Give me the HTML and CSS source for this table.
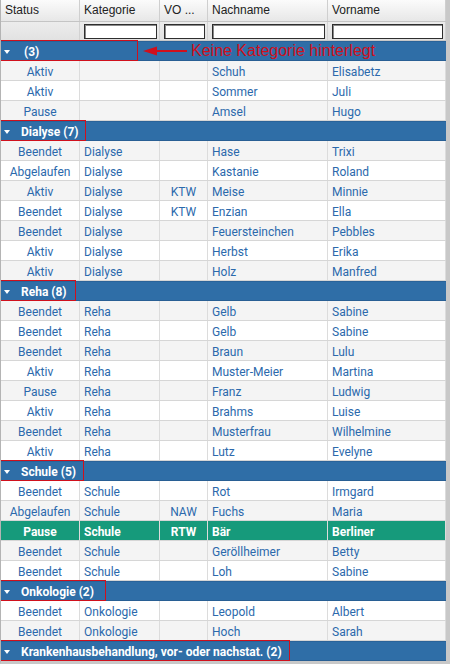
FILE: index.html
```html
<!DOCTYPE html>
<html lang="de">
<head>
<meta charset="utf-8">
<link rel="stylesheet" href="styles.css">
</head>
<body>
<div class="grid">
  <div class="row head">
    <div class="hc">Status</div>
    <div class="hc">Kategorie</div>
    <div class="hc">VO ...</div>
    <div class="hc">Nachname</div>
    <div class="hc">Vorname</div>
  </div>
  <div class="row filter">
    <div class="fc"></div>
    <div class="fc"><input class="fi" type="text"></div>
    <div class="fc"><input class="fi" type="text"></div>
    <div class="fc"><input class="fi" type="text"></div>
    <div class="fc"><input class="fi" type="text"></div>
  </div>

  <div class="group">
    <div class="mark" style="width:138px"><span class="tri"></span><span class="glabel">&nbsp;(3)</span></div>
    <svg class="arrow" width="44" height="12" viewBox="0 0 44 12"><polygon points="0,6 14,1.5 14,10.5" fill="#d0101c"/><rect x="13" y="5" width="31" height="2" fill="#d0101c"/></svg>
    <span class="note">Keine Kategorie hinterlegt</span>
  </div>
  <div class="row alt"><div class="c st">Aktiv</div><div class="c"></div><div class="c vo"></div><div class="c">Schuh</div><div class="c">Elisabetz</div></div>
  <div class="row"><div class="c st">Aktiv</div><div class="c"></div><div class="c vo"></div><div class="c">Sommer</div><div class="c">Juli</div></div>
  <div class="row alt"><div class="c st">Pause</div><div class="c"></div><div class="c vo"></div><div class="c">Amsel</div><div class="c">Hugo</div></div>

  <div class="group">
    <div class="mark" style="width:86px"><span class="tri"></span><span class="glabel">Dialyse (7)</span></div>
  </div>
  <div class="row alt"><div class="c st">Beendet</div><div class="c">Dialyse</div><div class="c vo"></div><div class="c">Hase</div><div class="c">Trixi</div></div>
  <div class="row"><div class="c st">Abgelaufen</div><div class="c">Dialyse</div><div class="c vo"></div><div class="c">Kastanie</div><div class="c">Roland</div></div>
  <div class="row alt"><div class="c st">Aktiv</div><div class="c">Dialyse</div><div class="c vo">KTW</div><div class="c">Meise</div><div class="c">Minnie</div></div>
  <div class="row"><div class="c st">Beendet</div><div class="c">Dialyse</div><div class="c vo">KTW</div><div class="c">Enzian</div><div class="c">Ella</div></div>
  <div class="row alt"><div class="c st">Beendet</div><div class="c">Dialyse</div><div class="c vo"></div><div class="c">Feuersteinchen</div><div class="c">Pebbles</div></div>
  <div class="row"><div class="c st">Aktiv</div><div class="c">Dialyse</div><div class="c vo"></div><div class="c">Herbst</div><div class="c">Erika</div></div>
  <div class="row alt"><div class="c st">Aktiv</div><div class="c">Dialyse</div><div class="c vo"></div><div class="c">Holz</div><div class="c">Manfred</div></div>

  <div class="group">
    <div class="mark" style="width:76px"><span class="tri"></span><span class="glabel">Reha (8)</span></div>
  </div>
  <div class="row alt"><div class="c st">Beendet</div><div class="c">Reha</div><div class="c vo"></div><div class="c">Gelb</div><div class="c">Sabine</div></div>
  <div class="row"><div class="c st">Beendet</div><div class="c">Reha</div><div class="c vo"></div><div class="c">Gelb</div><div class="c">Sabine</div></div>
  <div class="row alt"><div class="c st">Beendet</div><div class="c">Reha</div><div class="c vo"></div><div class="c">Braun</div><div class="c">Lulu</div></div>
  <div class="row"><div class="c st">Aktiv</div><div class="c">Reha</div><div class="c vo"></div><div class="c">Muster-Meier</div><div class="c">Martina</div></div>
  <div class="row alt"><div class="c st">Pause</div><div class="c">Reha</div><div class="c vo"></div><div class="c">Franz</div><div class="c">Ludwig</div></div>
  <div class="row"><div class="c st">Aktiv</div><div class="c">Reha</div><div class="c vo"></div><div class="c">Brahms</div><div class="c">Luise</div></div>
  <div class="row alt"><div class="c st">Beendet</div><div class="c">Reha</div><div class="c vo"></div><div class="c">Musterfrau</div><div class="c">Wilhelmine</div></div>
  <div class="row"><div class="c st">Aktiv</div><div class="c">Reha</div><div class="c vo"></div><div class="c">Lutz</div><div class="c">Evelyne</div></div>

  <div class="group">
    <div class="mark" style="width:84px"><span class="tri"></span><span class="glabel">Schule (5)</span></div>
  </div>
  <div class="row"><div class="c st">Beendet</div><div class="c">Schule</div><div class="c vo"></div><div class="c">Rot</div><div class="c">Irmgard</div></div>
  <div class="row alt"><div class="c st">Abgelaufen</div><div class="c">Schule</div><div class="c vo">NAW</div><div class="c">Fuchs</div><div class="c">Maria</div></div>
  <div class="row sel"><div class="c st">Pause</div><div class="c">Schule</div><div class="c vo">RTW</div><div class="c">Bär</div><div class="c">Berliner</div></div>
  <div class="row alt"><div class="c st">Beendet</div><div class="c">Schule</div><div class="c vo"></div><div class="c">Geröllheimer</div><div class="c">Betty</div></div>
  <div class="row"><div class="c st">Beendet</div><div class="c">Schule</div><div class="c vo"></div><div class="c">Loh</div><div class="c">Sabine</div></div>

  <div class="group">
    <div class="mark" style="width:106px"><span class="tri"></span><span class="glabel">Onkologie (2)</span></div>
  </div>
  <div class="row"><div class="c st">Beendet</div><div class="c">Onkologie</div><div class="c vo"></div><div class="c">Leopold</div><div class="c">Albert</div></div>
  <div class="row alt"><div class="c st">Beendet</div><div class="c">Onkologie</div><div class="c vo"></div><div class="c">Hoch</div><div class="c">Sarah</div></div>

  <div class="group">
    <div class="mark" style="width:290px"><span class="tri"></span><span class="glabel">Krankenhausbehandlung, vor- oder nachstat. (2)</span></div>
  </div>
</div>
</body>
</html>
```
FILE: styles.css
```css
html, body {
  margin: 0;
  padding: 0;
  background: #ffffff;
}

.grid {
  width: 450px;
  height: 664px;
  box-sizing: border-box;
  border-left: 1px solid #b4b4b4;
  border-right: 4px solid #c8c8c8;
  border-bottom: 3px solid #c8c8c8;
  overflow: hidden;
  background: #ffffff;
}

.row {
  display: grid;
  grid-template-columns: 79px 80px 48px 120px 118px;
  height: 20px;
  box-sizing: border-box;
  border-bottom: 1px solid #d6d6d6;
  font-family: Roboto, "Liberation Sans", sans-serif;
  font-size: 12px;
  color: #2b69ac;
  background: #ffffff;
}

.row.alt {
  background: #f4f4f4;
}

.row.sel {
  background: #169a7b;
  color: #ffffff;
  font-weight: bold;
  border-bottom-color: #d6d6d6;
}

.c {
  box-sizing: border-box;
  border-right: 1px solid #dcdcdc;
  padding-left: 4px;
  line-height: 22px;
  white-space: nowrap;
  overflow: hidden;
}

.c.st {
  padding-left: 0;
  text-align: center;
}

.c.vo {
  padding-left: 0;
  text-align: center;
}

.row.head {
  height: 22px;
  background: linear-gradient(#fbfbfb, #e7e7e7);
  border-bottom: 1px solid #c4c4c4;
  font-family: "Liberation Sans", Arial, sans-serif;
  color: #222222;
}

.hc {
  box-sizing: border-box;
  border-right: 1px solid #cfcfcf;
  padding-left: 4px;
  line-height: 21px;
  white-space: nowrap;
  overflow: hidden;
}

.row.filter {
  height: 19px;
  background: linear-gradient(#ececec, #e2e2e2);
  border-bottom: 1px solid #c8c8c8;
}

.fc {
  box-sizing: border-box;
  border-right: 1px solid #d2d2d2;
  padding-top: 2px;
}

.fi {
  display: block;
  box-sizing: border-box;
  margin: 0 0 0 4px;
  width: calc(100% - 6px);
  height: 15px;
  padding: 0;
  border: 1px solid #2e2e2e;
  box-shadow: inset 1px 1px 0 #8a8a8a;
  background: #ffffff;
}

.group {
  display: flex;
  align-items: center;
  height: 20px;
  box-sizing: border-box;
  background: #2f6ea7;
  border-top: 1px solid #2a6399;
  border-bottom: 1px solid #285f94;
  font-family: Roboto, "Liberation Sans", sans-serif;
  font-size: 12px;
  font-weight: bold;
  color: #ffffff;
}

.mark {
  display: flex;
  align-items: center;
  flex: none;
  height: 21px;
  margin-top: -1px;
  padding-top: 2px;
  box-sizing: border-box;
  border: 1.5px solid #d0101c;
  margin-left: -1px;
}

.tri {
  width: 0;
  height: 0;
  margin-left: 3px;
  border-left: 3px solid transparent;
  border-right: 3px solid transparent;
  border-top: 4px solid #ffffff;
}

.glabel {
  margin-left: 11px;
  white-space: pre;
}

.arrow {
  flex: none;
  margin-left: 5px;
}

.note {
  margin-left: 4px;
  font-family: "Liberation Sans", Arial, sans-serif;
  font-size: 16px;
  font-weight: normal;
  color: #d0101c;
  white-space: nowrap;
}
```
